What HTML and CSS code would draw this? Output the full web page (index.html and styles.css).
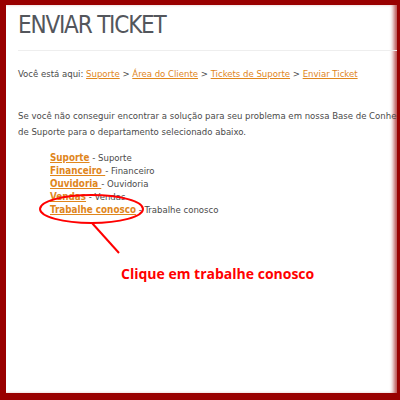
FILE: index.html
```html
<!DOCTYPE html>
<html>
<head>
<meta charset="utf-8">
<link rel="stylesheet" href="styles.css">
</head>
<body>
<div class="frame">
  <div class="page">
    <h1 class="title">ENVIAR TICKET</h1>
    <p class="crumbs">Você está aqui: <a href="#">Suporte</a> &gt; <a href="#">Área do Cliente</a> &gt; <a href="#">Tickets de Suporte</a> &gt; <a href="#">Enviar Ticket</a></p>
    <p class="intro">Se você não conseguir encontrar a solução para seu problema em nossa Base de Conhecimento, envie um ticket<br>de Suporte para o departamento selecionado abaixo.</p>
    <ul class="depts">
      <li><a href="#">Suporte</a> - Suporte</li>
      <li><a href="#">Financeiro </a> - Financeiro</li>
      <li><a href="#">Ouvidoria </a> - Ouvidoria</li>
      <li><a href="#">Vendas</a> - Vendas</li>
      <li><a href="#">Trabalhe conosco</a> - Trabalhe conosco</li>
    </ul>
    <p class="note">Clique em trabalhe conosco</p>
    <svg class="mark" width="110" height="64" viewBox="0 0 110 64">
      <ellipse cx="52.5" cy="15" rx="51.5" ry="14" fill="none" stroke="#ff0000" stroke-width="2"/>
      <line x1="53" y1="29" x2="80" y2="59" stroke="#ff0000" stroke-width="2"/>
    </svg>
  </div>
</div>
</body>
</html>
```
FILE: styles.css
```css
html, body { margin: 0; padding: 0; background: #fff; }
.frame {
  box-sizing: border-box;
  width: 400px;
  height: 400px;
  border-style: solid;
  border-color: #990000;
  border-width: 5px 3px 7px 6px;
  box-shadow: inset -5px 0 4px -2px rgba(153,0,0,0.7);
  overflow: hidden;
}
.page {
  position: relative;
  padding: 0 0 0 12px;
  font-family: "DejaVu Sans Condensed", Tahoma, sans-serif;
  font-size: 9.5px;
  color: #4a4a4a;
  white-space: nowrap;
}
.title {
  margin: 0;
  padding: 5px 0 10px;
  font-size: 24px;
  letter-spacing: -1.2px;
  font-weight: normal;
  color: #53565c;
  line-height: 30px;
  border-bottom: 1px solid #eee;
}
.crumbs { margin: 15px 0 0; line-height: 16px; }
.intro { margin: 26px 0 0; line-height: 16px; }
a { color: #e0861c; text-decoration: underline; }
.depts { list-style: none; margin: 11px 0 0; padding: 0 0 0 32px; line-height: 13px; }
.depts a { font-weight: bold; font-size: 9.8px; }
.note {
  margin: 48px 0 0 103px;
  font-family: "Open Sans", sans-serif;
  font-size: 14px;
  font-weight: bold;
  color: #ff0000;
}
.mark { position: absolute; left: 33px; top: 189px; }
```
